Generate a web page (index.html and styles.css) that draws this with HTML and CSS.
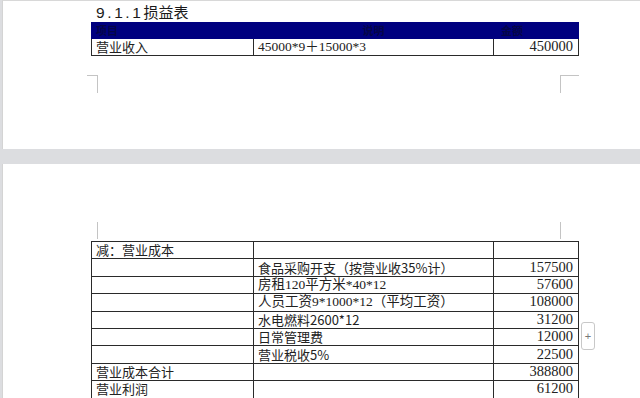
FILE: index.html
```html
<!DOCTYPE html>
<html lang="zh">
<head>
<meta charset="utf-8">
<link rel="stylesheet" href="styles.css">
</head>
<body>
<div class="page page-one">
  <h1 class="title"><span class="title-num">9.1.1</span>损益表</h1>
  <table class="sheet sheet-top">
    <colgroup><col class="c1"><col class="c2"><col class="c3"></colgroup>
    <tr class="head"><td>项目</td><td class="center">说明</td><td class="hleft">金额</td></tr>
    <tr><td>营业收入</td><td class="serif">45000*9＋15000*3</td><td class="num">450000</td></tr>
  </table>
  <div class="marks marks-bottom">
    <span class="mark mark-bl"></span>
    <span class="mark mark-br"></span>
  </div>
</div>
<div class="page page-two">
  <div class="marks marks-top">
    <span class="mark mark-tl"></span>
    <span class="mark mark-tr"></span>
  </div>
  <table class="sheet sheet-main">
    <colgroup><col class="c1"><col class="c2"><col class="c3"></colgroup>
    <tr><td>减：营业成本</td><td></td><td></td></tr>
    <tr><td></td><td>食品采购开支（按营业收35%计）</td><td class="num">157500</td></tr>
    <tr><td></td><td class="serif">房租120平方米*40*12</td><td class="num">57600</td></tr>
    <tr><td></td><td class="serif">人员工资9*1000*12（平均工资）</td><td class="num">108000</td></tr>
    <tr><td></td><td>水电燃料2600*12</td><td class="num">31200</td></tr>
    <tr><td></td><td>日常管理费</td><td class="num">12000</td></tr>
    <tr><td></td><td>营业税收5%</td><td class="num">22500</td></tr>
    <tr><td>营业成本合计</td><td></td><td class="num">388800</td></tr>
    <tr><td>营业利润</td><td></td><td class="num">61200</td></tr>
  </table>
  <button class="add-btn" type="button">+</button>
</div>
</body>
</html>
```
FILE: styles.css
```css
html, body {
  margin: 0;
  padding: 0;
}
body {
  width: 640px;
  height: 398px;
  overflow: hidden;
  background: #dcdde0;
  font-family: "Noto Sans CJK SC", "Microsoft YaHei", sans-serif;
  color: #222;
}
.page {
  background: #fff;
  margin-left: 2px;
  border-left: 1px solid #d4d4d4;
  padding-left: 87px;
  box-sizing: border-box;
}
.page-one {
  height: 149px;
  border-top: 1px solid #d8d8d8;
  padding-top: 1px;
}
.page-two {
  position: relative;
  margin-top: 15px;
  height: 240px;
  padding-top: 58px;
}
.title {
  margin: 0 0 0 6px;
  font-size: 15px;
  font-weight: normal;
  line-height: 20px;
  height: 20px;
  color: #1a1a1a;
}
.title-num {
  font-family: "Liberation Sans", sans-serif;
  font-size: 15.5px;
  letter-spacing: 2.6px;
}
.sheet {
  border-collapse: collapse;
  table-layout: fixed;
  width: 487px;
  margin-left: 1px;
  font-size: 13px;
}
.c1 { width: 162px; }
.c2 { width: 240px; }
.c3 { width: 85px; }
.sheet td {
  border: 1px solid #2a2a2a;
  padding: 0 4px 1px;
  line-height: 15px;
  white-space: nowrap;
  overflow: hidden;
}
.sheet-top tr { height: 16px; }
.sheet-main tr { height: 17.4px; }
.head td {
  background: #00007f;
  border-color: #00007f;
  color: #050548;
  font-size: 11px;
  font-weight: bold;
  line-height: 14px;
}
.head .center { text-align: center; }
.head .hleft { padding-left: 7px; }
.serif {
  font-family: "Liberation Serif", "Noto Sans CJK SC", serif;
  font-size: 13.5px;
}
.num {
  text-align: right;
  font-family: "Liberation Serif", serif;
  font-size: 14.5px;
  padding-right: 5px !important;
}
.marks {
  display: flex;
  justify-content: space-between;
  width: 487px;
}
.marks-bottom {
  margin-top: 19px;
}
.mark {
  display: block;
  height: 17px;
  border-color: #c4c4c4;
  border-style: solid;
  border-width: 0;
}
.mark-bl {
  width: 10px;
  margin-left: -3px;
  border-top-width: 1px;
  border-right-width: 1px;
}
.mark-br {
  width: 18px;
  margin-right: -2px;
  border-top-width: 1px;
  border-left-width: 1px;
}
.marks-top {
  margin-bottom: 2px;
}
.mark-tl {
  width: 10px;
  margin-left: -3px;
  border-right-width: 1px;
}
.mark-tr {
  width: 18px;
  margin-right: -2px;
  border-left-width: 1px;
}
.add-btn {
  position: absolute;
  left: 578px;
  top: 158px;
  width: 14px;
  height: 28px;
  padding: 0;
  border: 1px solid #c8c8c8;
  border-radius: 3px;
  background: #fff;
  color: #777;
  font-family: "Liberation Sans", sans-serif;
  font-size: 11px;
  line-height: 26px;
  text-align: center;
}
```
